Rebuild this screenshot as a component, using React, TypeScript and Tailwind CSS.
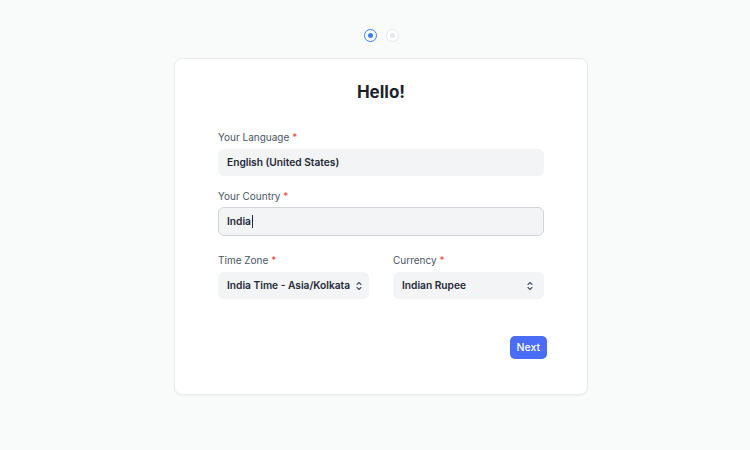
import React from "react";

function Chevrons() {
  return (
    <svg width="8" height="10" viewBox="0 0 8 10" fill="none" stroke="#4b5563" strokeWidth="1.1" strokeLinecap="round" strokeLinejoin="round">
      <path d="M2 3.5 L4 1.5 L6 3.5" />
      <path d="M2 6.5 L4 8.5 L6 6.5" />
    </svg>
  );
}

function Label({ children }: { children: React.ReactNode }) {
  return (
    <div className="text-[10px] text-[#4b5563] leading-none">
      {children} <span className="text-[#ef4444]">*</span>
    </div>
  );
}

export default function App() {
  return (
    <div
      className="w-[750px] h-[450px] bg-[#f9fafa] flex flex-col items-center pl-[12px]"
      style={{ fontFamily: "Inter, 'Noto Sans', sans-serif" }}
    >
      <div className="mt-[29px] flex items-center gap-[9px]">
        <div className="w-[13px] h-[13px] rounded-full border border-[#3b82f6] bg-white flex items-center justify-center">
          <div className="w-[5px] h-[5px] rounded-full bg-[#3b82f6]" />
        </div>
        <div className="w-[13px] h-[13px] rounded-full border border-[#e5e7eb] bg-white flex items-center justify-center">
          <div className="w-[5px] h-[5px] rounded-full bg-[#e5e7eb]" />
        </div>
      </div>

      <div className="mt-[16px] w-[414px] h-[337px] bg-white border border-[#e8eaed] rounded-[8px] shadow-[0_1px_2px_rgba(0,0,0,0.04)] flex flex-col px-[43px]">
        <h1 className="mt-[22px] text-center text-[17px] font-bold text-[#1f1f2e] leading-[22px]">Hello!</h1>

        <div className="mt-[29px]">
          <Label>Your Language</Label>
          <div className="mt-[7px] h-[27px] rounded-[6px] bg-[#f3f4f6] flex items-center px-[9px] text-[10.2px] font-semibold text-[#1f2937]">
            English (United States)
          </div>
        </div>

        <div className="mt-[15px]">
          <Label>Your Country</Label>
          <div className="mt-[6px] h-[29px] rounded-[6px] bg-[#f3f4f6] border-[1.5px] border-[#d1d5db] flex items-center px-[8px] text-[10.2px] font-semibold text-[#1f2937]">
            India<span className="inline-block w-[1px] h-[13px] bg-[#1f2937] ml-[1px]" />
          </div>
        </div>

        <div className="mt-[19px] grid grid-cols-2 gap-[24px]">
          <div>
            <Label>Time Zone</Label>
            <div className="mt-[7px] h-[27px] rounded-[6px] bg-[#f3f4f6] flex items-center justify-between pl-[9px] pr-[6px] text-[10.2px] font-semibold text-[#1f2937]">
              <span className="whitespace-nowrap">India Time - Asia/Kolkata</span>
              <Chevrons />
            </div>
          </div>
          <div>
            <Label>Currency</Label>
            <div className="mt-[7px] h-[27px] rounded-[6px] bg-[#f3f4f6] flex items-center justify-between pl-[9px] pr-[10px] text-[10.2px] font-semibold text-[#1f2937]">
              <span>Indian Rupee</span>
              <Chevrons />
            </div>
          </div>
        </div>

        <div className="mt-[37px] flex justify-end -mr-[3px]">
          <button className="h-[23px] px-[7px] rounded-[5px] bg-[#4a6cf7] text-white text-[10.5px] font-medium">Next</button>
        </div>
      </div>
    </div>
  );
}
